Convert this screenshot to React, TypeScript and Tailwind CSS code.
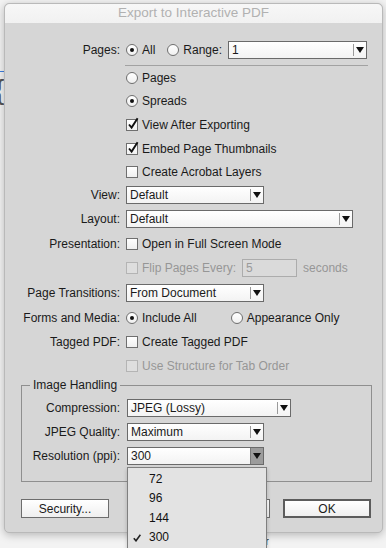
import type { ReactNode } from 'react'

// Mac-style "Export to Interactive PDF" dialog with an open resolution menu

function Arrow() {
  return (
    <svg width="8" height="6" viewBox="0 0 8 6" className="block">
      <polygon points="0,0 8,0 4,6" fill="#111" />
    </svg>
  )
}

function Radio({ checked, label }: { checked?: boolean; label: string }) {
  return (
    <div className="flex items-center gap-[4px]">
      <span className="flex h-[12px] w-[12px] items-center justify-center rounded-full border border-[#6f6f6f] bg-gradient-to-b from-white to-[#f0f0f0]">
        {checked && <span className="h-[4px] w-[4px] rounded-full bg-[#111]" />}
      </span>
      <span>{label}</span>
    </div>
  )
}

function Check({ checked, disabled, label }: { checked?: boolean; disabled?: boolean; label: string }) {
  return (
    <div className={disabled ? 'flex items-center gap-[4px] text-[#969696]' : 'flex items-center gap-[4px]'}>
      <span
        className={
          disabled
            ? 'relative h-[12px] w-[12px] border border-[#b4b4b4] bg-[#dedede]'
            : 'relative h-[12px] w-[12px] border border-[#6f6f6f] bg-gradient-to-b from-white to-[#f0f0f0]'
        }
      >
        {checked && (
          <svg width="12" height="13" viewBox="0 0 12 13" className="absolute left-[0px] top-[-3px] overflow-visible">
            <path d="M2 7.5 L4.6 10.6 L10.6 1.2" fill="none" stroke="#111" strokeWidth="1.9" />
          </svg>
        )}
      </span>
      <span>{label}</span>
    </div>
  )
}

function Select({ value, w, pressed, children }: { value: string; w: string; pressed?: boolean; children?: ReactNode }) {
  return (
    <div className={`relative flex h-[18px] items-stretch border border-[#6a6a6a] bg-gradient-to-b from-white to-[#f3f3f3] ${w}`}>
      <span className="flex flex-1 items-center pl-[3px] leading-none">{value}</span>
      {pressed ? (
        <span className="flex w-[13px] items-center justify-center border-l border-[#7a7a7a] bg-[#9c9c9c]">
          <Arrow />
        </span>
      ) : (
        <span className="flex w-[13px] items-center justify-center">
          <span className="mr-auto h-[12px] w-px bg-[#9a9a9a]" />
          <span className="mr-[2px]">
            <Arrow />
          </span>
        </span>
      )}
      {children}
    </div>
  )
}

function Row({ label, h, lw, gap, children }: { label?: string; h: string; lw: string; gap: string; children?: ReactNode }) {
  return (
    <div className={`flex items-center ${h} ${gap}`}>
      <div className={`shrink-0 text-right ${lw}`}>{label}</div>
      <div className="flex items-center">{children}</div>
    </div>
  )
}

function Button({ label, primary, w }: { label: string; primary?: boolean; w: string }) {
  return (
    <div
      className={
        primary
          ? `flex h-[19px] items-center justify-center border-2 border-[#5c5c5c] bg-gradient-to-b from-white to-[#efefef] ${w}`
          : `flex h-[19px] items-center justify-center border border-[#6d6d6d] bg-gradient-to-b from-white to-[#efefef] ${w}`
      }
    >
      {label}
    </div>
  )
}

export default function App() {
  return (
    <div className="relative h-[548px] w-[386px] overflow-hidden bg-[#f3f3f3] pl-[4px] pt-[3px] font-['Liberation_Sans',Arial,sans-serif] text-[12px] text-[#1a1a1a]">
      {/* document behind the dialog */}
      <div className="absolute left-0 top-[71px] h-px w-[4px] bg-[#3f7fe0]" />
      <div className="absolute left-[-5px] top-[76px] text-[28px] leading-none text-[#555]">{'{'}</div>
      <div className="absolute left-[260px] top-[537px] text-[10px] leading-none text-[#222]">ar</div>

      <div className="relative flex w-[379px] flex-col rounded-[5px] border border-[#b9b9b9] bg-[#d6d6d6] shadow-[0_2px_8px_rgba(0,0,0,0.25)]">
        {/* title bar */}
        <div className="flex h-[19px] items-center justify-center rounded-t-[5px] bg-gradient-to-b from-[#f7f7f7] to-[#f1f1f1] text-[13.5px] text-[#b1b1b1]">
          Export to Interactive PDF
        </div>

        <div className="flex flex-col pt-[18px]">
          <Row label="Pages:" h="h-[18px]" lw="w-[115px]" gap="gap-[6px]">
            <Radio checked label="All" />
            <div className="ml-[12px]">
              <Radio label="Range:" />
            </div>
            <div className="ml-[6px]">
              <Select value="1" w="w-[139px]" />
            </div>
          </Row>
          <div className="ml-[120px] mt-[6px] h-px w-[243px] bg-[#a2a2a2]" />

          <Row h="h-[23px]" lw="w-[115px]" gap="gap-[6px]">
            <Radio label="Pages" />
          </Row>
          <Row h="h-[24px]" lw="w-[115px]" gap="gap-[6px]">
            <Radio checked label="Spreads" />
          </Row>
          <Row h="h-[24px]" lw="w-[115px]" gap="gap-[6px]">
            <Check checked label="View After Exporting" />
          </Row>
          <Row h="h-[23px]" lw="w-[115px]" gap="gap-[6px]">
            <Check checked label="Embed Page Thumbnails" />
          </Row>
          <Row h="h-[23px]" lw="w-[115px]" gap="gap-[6px]">
            <Check label="Create Acrobat Layers" />
          </Row>
          <Row label="View:" h="h-[23px]" lw="w-[115px]" gap="gap-[6px]">
            <Select value="Default" w="w-[138px]" />
          </Row>
          <Row label="Layout:" h="h-[25px]" lw="w-[115px]" gap="gap-[6px]">
            <Select value="Default" w="w-[227px]" />
          </Row>
          <Row label="Presentation:" h="h-[25px]" lw="w-[115px]" gap="gap-[6px]">
            <Check label="Open in Full Screen Mode" />
          </Row>
          <Row h="h-[24px]" lw="w-[115px]" gap="gap-[6px]">
            <Check disabled label="Flip Pages Every:" />
            <div className="ml-[6px] flex h-[18px] w-[55px] items-center border border-[#acacac] bg-[#dadada] pl-[3px] text-[#9a9a9a]">
              5
            </div>
            <span className="ml-[6px] text-[#969696]">seconds</span>
          </Row>
          <Row label="Page Transitions:" h="h-[25px]" lw="w-[115px]" gap="gap-[6px]">
            <Select value="From Document" w="w-[138px]" />
          </Row>
          <Row label="Forms and Media:" h="h-[25px]" lw="w-[115px]" gap="gap-[6px]">
            <Radio checked label="Include All" />
            <div className="ml-[34px]">
              <Radio label="Appearance Only" />
            </div>
          </Row>
          <Row label="Tagged PDF:" h="h-[24px]" lw="w-[115px]" gap="gap-[6px]">
            <Check label="Create Tagged PDF" />
          </Row>
          <Row h="h-[24px]" lw="w-[115px]" gap="gap-[6px]">
            <Check disabled label="Use Structure for Tab Order" />
          </Row>

          {/* Image Handling group */}
          <fieldset className="ml-[16px] w-[351px] border border-[#8f8f8f] pb-[13px]">
            <legend className="ml-[8px] px-[3px] leading-[14px]">Image Handling</legend>
            <div className="flex flex-col pt-[4px]">
              <Row label="Compression:" h="h-[24px]" lw="w-[98px]" gap="gap-[7px]">
                <Select value="JPEG (Lossy)" w="w-[164px]" />
              </Row>
              <Row label="JPEG Quality:" h="h-[24px]" lw="w-[98px]" gap="gap-[7px]">
                <Select value="Maximum" w="w-[137px]" />
              </Row>
              <Row label="Resolution (ppi):" h="h-[24px]" lw="w-[98px]" gap="gap-[7px]">
                <Select value="300" w="w-[137px]" pressed>
                  {/* open popup menu */}
                  <div className="absolute left-[-1px] top-[19px] z-10 flex w-[140px] flex-col border border-[#7f7f7f] bg-[#e3e3e3] py-px shadow-[0_2px_4px_rgba(0,0,0,0.2)]">
                    {['72', '96', '144', '300'].map((v) => (
                      <div key={v} className="relative flex h-[19.5px] items-center pl-[21px] text-[#111]">
                        {v === '300' && (
                          <svg width="8" height="8" viewBox="0 0 8 8" className="absolute left-[5px] top-[6px]">
                            <path d="M0.8 4.2 L3 6.8 L7.4 0.8" fill="none" stroke="#222" strokeWidth="1.6" />
                          </svg>
                        )}
                        {v}
                      </div>
                    ))}
                  </div>
                </Select>
              </Row>
            </div>
          </fieldset>

          <div className="mt-[17px] flex pb-[14px] pl-[16px]">
            <Button label="Security..." w="w-[88px]" />
            <div className="ml-[73px]">
              <Button label="Cancel" w="w-[88px]" />
            </div>
            <div className="ml-[13px]">
              <Button label="OK" primary w="w-[88px]" />
            </div>
          </div>
        </div>
      </div>
    </div>
  )
}
